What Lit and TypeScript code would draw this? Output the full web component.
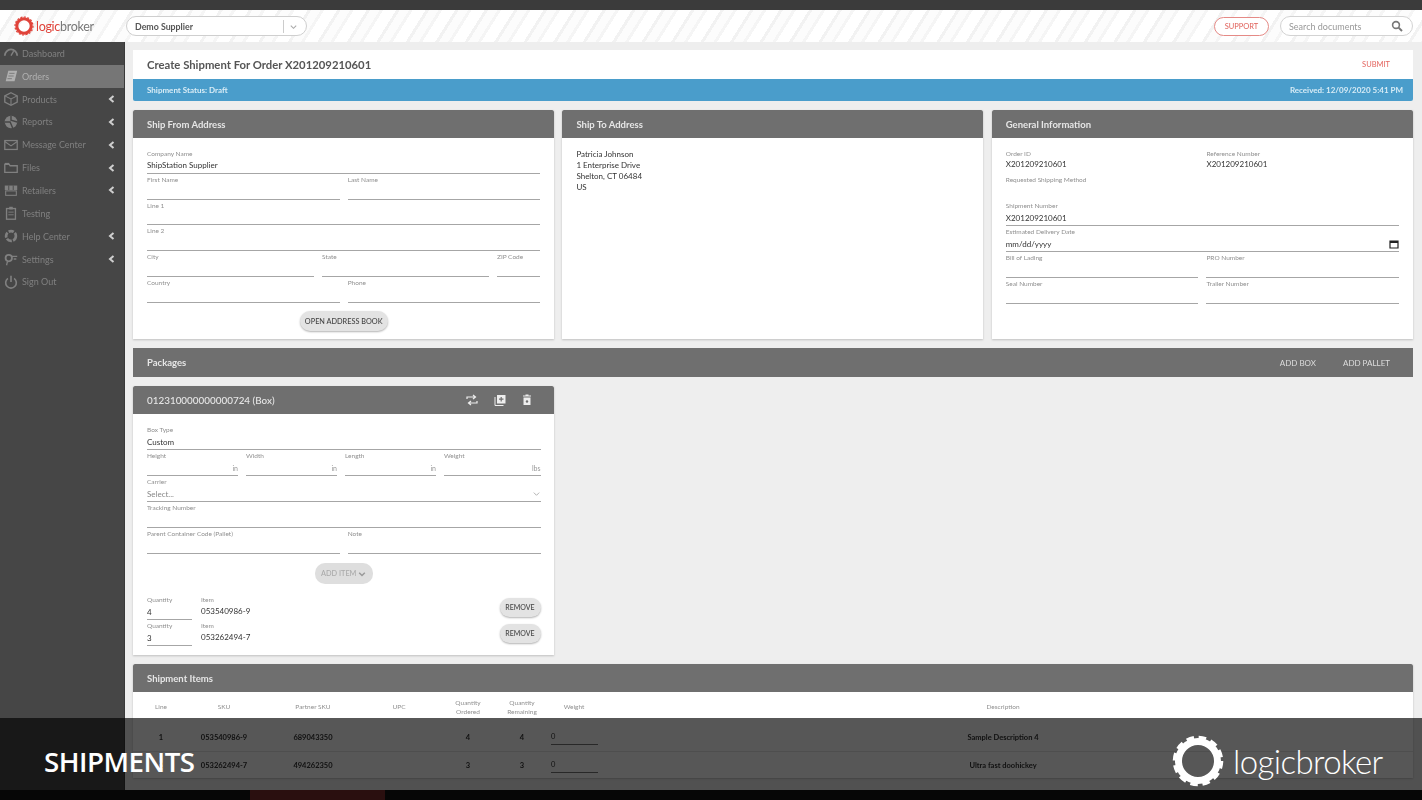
import { LitElement, html, css, svg, nothing } from "lit";
import { customElement } from "lit/decorators.js";

const icons: Record<string, unknown> = {
  dash: svg`<path d="M2 12a7 7 0 0 1 14 0" fill="none" stroke="currentColor" stroke-width="2"/><path d="M9 12l3-5" stroke="currentColor" stroke-width="1.6"/>`,
  orders: svg`<path d="M6 3h10l-3 12H3z" fill="currentColor"/><path d="M7 6h6M6 9h6M5 12h5" stroke="#777" stroke-width="1"/>`,
  products: svg`<path d="M9 2l7 3.5v7L9 16l-7-3.5v-7z" fill="none" stroke="currentColor" stroke-width="1.5"/><path d="M2 5.5L9 9l7-3.5M9 9v7" fill="none" stroke="currentColor" stroke-width="1.2"/>`,
  reports: svg`<circle cx="9" cy="9" r="7" fill="currentColor"/><path d="M2 9h6l3 7M9 2v5l7 2" fill="none" stroke="#454545" stroke-width="1.6"/>`,
  mail: svg`<rect x="2" y="4" width="14" height="10" fill="none" stroke="currentColor" stroke-width="1.4"/><path d="M2 5l7 5 7-5" fill="none" stroke="currentColor" stroke-width="1.3"/>`,
  files: svg`<path d="M2 5h5l1 1.5h8V14H2z" fill="none" stroke="currentColor" stroke-width="1.5"/><path d="M2 4h5" stroke="currentColor" stroke-width="1.5"/>`,
  retail: svg`<path d="M2 4h14v5H2z" fill="currentColor"/><path d="M6.5 4v5M11.5 4v5" stroke="#454545"/><rect x="3" y="10" width="12" height="5" fill="none" stroke="currentColor" stroke-width="1.2"/>`,
  test: svg`<rect x="4" y="4" width="10" height="12" fill="none" stroke="currentColor" stroke-width="1.5"/><rect x="7" y="2" width="4" height="3" fill="currentColor"/><path d="M6 8h6M6 11h6" stroke="currentColor"/>`,
  help: svg`<circle cx="9" cy="9" r="5.5" fill="none" stroke="currentColor" stroke-width="3" stroke-dasharray="6 1.5"/>`,
  settings: svg`<circle cx="6.5" cy="8" r="3.6" fill="none" stroke="currentColor" stroke-width="2"/><path d="M5 12l-1 4M10 6h6M12 9h3" stroke="currentColor" stroke-width="1.5"/>`,
  power: svg`<path d="M5.5 5a6 6 0 1 0 7 0" fill="none" stroke="currentColor" stroke-width="1.8"/><path d="M9 2v7" stroke="currentColor" stroke-width="1.8"/>`,
};

const nav = [
  ["Dashboard", "dash", 0], ["Orders", "orders", 0], ["Products", "products", 1],
  ["Reports", "reports", 1], ["Message Center", "mail", 1], ["Files", "files", 1],
  ["Retailers", "retail", 1], ["Testing", "test", 0], ["Help Center", "help", 1],
  ["Settings", "settings", 1], ["Sign Out", "power", 0],
] as const;

const f = (label: string, value = "", suffix = "") => html`
  <div class="field">
    <span class="lab">${label}</span>
    <div class="inp"><span>${value}</span>${suffix ? html`<em>${suffix}</em>` : nothing}</div>
  </div>`;

const ro = (label: string, value = "") => html`
  <div class="ro"><span class="lab">${label}</span><div class="val">${value}</div></div>`;

@customElement("app-root")
export class AppRoot extends LitElement {
  static styles = css`
    :host { display: block; width: 1422px; height: 800px; overflow: hidden; background: #141414; position: relative;
      font-family: Lato, "Open Sans", sans-serif; color: #333; }
    .app { height: 800px; display: flex; flex-direction: column; filter: blur(0.6px); }
    .strip { height: 10px; flex: none; background: #3b3b3b; }
    .bottom { height: 10px; flex: none; background: #141414; }
    .head { height: 32px; flex: none; display: flex; align-items: center; padding: 0 9px 0 14px;
      background: repeating-linear-gradient(122deg, #fff 0 11px, #f2f2f2 11px 14px, #fcfcfc 14px 22px, #f5f5f5 22px 25px); }
    .logo { display: flex; align-items: center; width: 112px; font-size: 12.5px; letter-spacing: -0.3px; color: #777; }
    .logo svg { width: 20px; height: 20px; margin-right: 2px; }
    .logo b { color: #e0433a; font-weight: 400; }
    .sel { width: 181px; height: 20px; box-sizing: border-box; border: 1px solid #cfcfcf; border-radius: 11px; background: #fff;
      display: flex; align-items: center; padding: 0 8px; font-size: 8.8px; font-weight: 700; color: #555; }
    .sel span { flex: 1; }
    .sel i { width: 1px; height: 13px; background: #ccc; margin-right: 5px; }
    .sel svg { width: 9px; height: 9px; }
    .sp { flex: 1; }
    .support { width: 55px; height: 19px; box-sizing: border-box; border: 1px solid #e58a86; border-radius: 10px; background: #fff; color: #e0605a;
      font-size: 7.5px; display: flex; align-items: center; justify-content: center; margin-right: 11px; }
    .search { width: 133px; height: 20px; box-sizing: border-box; border: 1px solid #d3d3d3; border-radius: 10px; background: #fff; display: flex; align-items: center;
      padding: 0 9px 0 8px; font-size: 9px; color: #999; justify-content: space-between; }
    .search svg { width: 12px; height: 12px; }
    .body { flex: 1; min-height: 0; display: flex; background: #eee; }
    .side { width: 125px; box-sizing: border-box; flex: none; background: #464646; border-right: 1px solid #3a3a3a; }
    .nav { height: 22.85px; display: flex; align-items: center; padding: 0 8px 0 3px; color: #808080; font-size: 9px; box-sizing: border-box; }
    .nav.on { background: #767676; color: #b0b0b0; }
    .nav svg.ic { width: 16px; height: 16px; margin-right: 3px; flex: none; }
    .nav span { flex: 1; }
    .nav svg.ch { width: 7px; height: 8px; color: #cfcfcf; margin-right: 1px; }
    .main { flex: 1; min-width: 0; padding: 8px 9px 0 8px; overflow: hidden; display: flex; flex-direction: column; }
    .title { height: 29px; flex: none; background: #fff; display: flex; align-items: center; justify-content: space-between; padding: 0 23px 0 14px;
      font-size: 11.3px; font-weight: 700; color: #555; }
    .title a { font-size: 7.5px; font-weight: 400; color: #e4655f; }
    .status { height: 22px; flex: none; background: #4a9dcb; color: #d8ecf6; display: flex; align-items: center; justify-content: space-between;
      padding: 0 10px 0 14px; font-size: 8px; font-weight: 700; border-radius: 0 0 2px 2px; }
    .cols { display: grid; grid-template-columns: 420.9px 420.9px 420.9px; column-gap: 8.5px; margin-top: 9px; flex: none; }
    .card { background: #fff; display: flex; flex-direction: column; box-shadow: 0 1px 2px rgba(0,0,0,.2); }
    .bar { height: 28px; flex: none; background: #6f6f6f; color: #e6e6e6; font-size: 9.5px; font-weight: 700; display: flex; align-items: center; padding: 0 14px; border-radius: 2px 2px 0 0; }
    .cb { padding: 10px 13.5px 8px 14px; height: 183px; box-sizing: content-box; display: flex; flex-direction: column; }
    .row { display: grid; column-gap: 8px; }
    .r2 { grid-template-columns: 1fr 1fr; }
    .r3 { grid-template-columns: 167px 167px 1fr; }
    .r4 { grid-template-columns: 91px 91px 91px 1fr; }
    .field { height: 26px; display: flex; flex-direction: column; box-sizing: border-box; padding-top: 1px; }
    .lab { display: block; font-size: 6.5px; line-height: 9px; color: #8f8f8f; white-space: nowrap; }
    .inp { flex: 1; border-bottom: 1px solid #a6a6a6; display: flex; align-items: center; justify-content: space-between; font-size: 8px; color: #333; }
    .inp em { font-style: normal; color: #999; font-size: 7px; }
    .ph { color: #888; }
    .ro { height: 26px; padding-top: 1px; box-sizing: border-box; }
    .val { font-size: 8px; line-height: 13px; color: #333; }
    .addr { padding-top: 11px; height: 182px; }
    .btn { align-self: center; height: 20px; display: flex; align-items: center; justify-content: center; padding: 0 5px; border-radius: 10px; background: #e3e3e3;
      font-size: 7.3px; font-weight: 500; color: #444; box-shadow: 0 1px 2px rgba(0,0,0,.3); white-space: nowrap; }
    .mt { margin-top: 8px; }
    .pk { height: 29px; flex: none; margin-top: 9px; background: #6f6f6f; color: #e6e6e6; font-size: 9.5px; font-weight: 700; display: flex; align-items: center; padding: 0 23px 0 14px; }
    .pk span { flex: 1; }
    .pk a { font-size: 8px; font-weight: 400; color: #ddd; margin-left: 27px; }
    .box { width: 421px; height: 269px; flex: none; margin-top: 9px; }
    .box .bar { font-weight: 500; font-size: 9.9px; }
    .box .bar span { flex: 1; }
    .box .bar svg { width: 12px; height: 12px; margin-left: 15.5px; }
    .box .bar svg:last-child { margin-right: 7px; }
    .bb { padding: 10px 13.5px 0 14px; display: flex; flex-direction: column; }
    .add { width: 58px; height: 21px; padding: 0; gap: 2px; margin-top: 9px; margin-bottom: 10px; background: #dedede; color: #aaa; box-shadow: none; }
    .add svg { width: 8px; height: 8px; }
    .qrow { display: flex; height: 26px; }
    .q { width: 45px; margin-right: 9px; flex: none; }
    .it { flex: 1; padding-top: 1px; }
    .it .val { padding-top: 1px; }
    .qrow .btn { width: 41px; height: 19px; padding: 0; font-size: 7px; }
    .items { flex: none; margin-top: 9px; height: 114px; }
    table { border-collapse: collapse; width: 100%; table-layout: fixed; }
    th { font-size: 6.5px; font-weight: 400; color: #8f8f8f; height: 32px; line-height: 9px; padding: 0 0 3px; box-sizing: border-box; }
    td { font-size: 7.5px; font-weight: 700; color: #333; height: 27px; text-align: center; padding: 0; border-bottom: 1px solid #e4e4e4; }
    .c1 { width: 56px; } .c2 { width: 70px; } .c3 { width: 108px; } .c4 { width: 64px; } .c5 { width: 74px; } .c6 { width: 34px; } .c7 { width: 70px; }
    .desc { padding-right: 16px; }
    td u { display: block; width: 47px; text-decoration: none; font-weight: 400; border-bottom: 1px solid #777; text-align: left; margin-left: 12px; line-height: 14px; }
    .ov { position: absolute; left: 0; right: 0; top: 718px; bottom: 0; background: rgba(0,0,0,.66); }
    .shipments { position: absolute; left: 44px; top: 745px; font-family: "Open Sans", Lato, sans-serif; font-size: 27.7px; line-height: 32px; font-weight: 600; letter-spacing: -0.5px; color: #fff; }
    .mark { position: absolute; left: 1172px; top: 735px; display: flex; align-items: center; color: #fff; font-size: 33px; font-weight: 300; letter-spacing: -0.6px; }
    .mark svg { width: 52px; height: 52px; margin-right: 9px; }
    .red { position: absolute; left: 250px; top: 790px; width: 135px; height: 10px; background: #2a0f0f; }
  `;

  render() {
    return html`
      <div class="app">
        <div class="strip"></div>
        <div class="head">
          <div class="logo">
            <svg viewBox="0 0 20 20"><circle cx="10" cy="10" r="7.2" fill="none" stroke="#e0433a" stroke-width="3"/><circle cx="10" cy="10" r="9" fill="none" stroke="#e0433a" stroke-width="1.2" stroke-dasharray="2 1.5"/></svg>
            <span><b>logic</b>broker</span>
          </div>
          <div class="sel"><span>Demo Supplier</span><i></i><svg viewBox="0 0 10 10"><path d="M2 4l3 3 3-3" fill="none" stroke="#aaa" stroke-width="1.2"/></svg></div>
          <div class="sp"></div>
          <div class="support">SUPPORT</div>
          <div class="search"><span>Search documents</span><svg viewBox="0 0 12 12"><circle cx="5" cy="5" r="3.4" fill="none" stroke="#777" stroke-width="1.6"/><path d="M7.6 7.6L11 11" stroke="#777" stroke-width="2"/></svg></div>
        </div>
        <div class="body">
          <div class="side">
            ${nav.map(([t, i, c]) => html`
              <div class="nav ${t === "Orders" ? "on" : ""}">
                <svg class="ic" viewBox="0 0 18 18">${icons[i]}</svg>
                <span>${t}</span>
                ${c ? html`<svg class="ch" viewBox="0 0 7 8"><path d="M5.5 1L2 4l3.5 3" fill="none" stroke="currentColor" stroke-width="2"/></svg>` : nothing}
              </div>`)}
          </div>
          <div class="main">
            <div class="title"><span>Create Shipment For Order X201209210601</span><a>SUBMIT</a></div>
            <div class="status"><span>Shipment Status: Draft</span><span>Received: 12/09/2020 5:41 PM</span></div>
            <div class="cols">
              <div class="card">
                <div class="bar">Ship From Address</div>
                <div class="cb">
                  ${f("Company Name", "ShipStation Supplier")}
                  <div class="row r2">${f("First Name")}${f("Last Name")}</div>
                  ${f("Line 1")}${f("Line 2")}
                  <div class="row r3">${f("City")}${f("State")}${f("ZIP Code")}</div>
                  <div class="row r2">${f("Country")}${f("Phone")}</div>
                  <div class="btn mt">OPEN ADDRESS BOOK</div>
                </div>
              </div>
              <div class="card">
                <div class="bar">Ship To Address</div>
                <div class="cb addr">
                  <div class="val" style="line-height:11px">Patricia Johnson<br>1 Enterprise Drive<br>Shelton, CT 06484<br>US</div>
                </div>
              </div>
              <div class="card">
                <div class="bar">General Information</div>
                <div class="cb">
                  <div class="row r2">${ro("Order ID", "X201209210601")}${ro("Reference Number", "X201209210601")}</div>
                  ${ro("Requested Shipping Method")}
                  ${f("Shipment Number", "X201209210601")}
                  <div class="field"><span class="lab">Estimated Delivery Date</span><div class="inp"><span>mm/dd/yyyy</span>
                    <svg width="10" height="10" viewBox="0 0 10 10"><path d="M1 2h8v7H1z" fill="none" stroke="#222" stroke-width="1.2"/><path d="M1 2h8v2H1z" fill="#222"/></svg></div></div>
                  <div class="row r2">${f("Bill of Lading")}${f("PRO Number")}</div>
                  <div class="row r2">${f("Seal Number")}${f("Trailer Number")}</div>
                </div>
              </div>
            </div>
            <div class="pk"><span>Packages</span><a>ADD BOX</a><a>ADD PALLET</a></div>
            <div class="card box">
              <div class="bar"><span>012310000000000724 (Box)</span>
                <svg viewBox="0 0 12 12"><path d="M1 5V3h8M7 1l2.500 2L7 5M11 7v2H3M5 7L2.500 9 5 11" fill="none" stroke="#eee" stroke-width="1.2"/></svg>
                <svg viewBox="0 0 12 12"><rect x="3" y="1" width="8.500" height="8.500" fill="#eee"/><path d="M7.200 3v4.500M5 5.200h4.500" stroke="#6f6f6f" stroke-width="1.200"/><path d="M1 3v8.500h8.500" fill="none" stroke="#eee" stroke-width="1"/></svg>
                <svg viewBox="0 0 12 12"><path d="M2.500 3.500h7V11h-7z" fill="#eee"/><path d="M2 2h8M4.500 1h3" stroke="#eee" stroke-width="1.200"/><circle cx="6" cy="7.500" r="1.200" fill="#6f6f6f"/></svg>
              </div>
              <div class="bb">
                ${f("Box Type", "Custom")}
                <div class="row r4">${f("Height", "", "in")}${f("Width", "", "in")}${f("Length", "", "in")}${f("Weight", "", "lbs")}</div>
                <div class="field"><span class="lab">Carrier</span><div class="inp"><span class="ph">Select...</span>
                  <svg width="9" height="9" viewBox="0 0 10 10"><path d="M2 4l3 3 3-3" fill="none" stroke="#aaa" stroke-width="1"/></svg></div></div>
                ${f("Tracking Number")}
                <div class="row r2">${f("Parent Container Code (Pallet)")}${f("Note")}</div>
                <div class="btn add"><span>ADD ITEM</span><svg viewBox="0 0 10 10"><path d="M1.500 3.500L5 7l3.500-3.500" fill="none" stroke="#999" stroke-width="1.800"/></svg></div>
                ${[["4", "053540986-9"], ["3", "053262494-7"]].map(([q, i]) => html`
                  <div class="qrow">
                    <div class="q field"><span class="lab">Quantity</span><div class="inp"><span>${q}</span></div></div>
                    <div class="it"><span class="lab">Item</span><div class="val">${i}</div></div>
                    <div class="btn">REMOVE</div>
                  </div>`)}
              </div>
            </div>
            <div class="card items">
              <div class="bar">Shipment Items</div>
              <table>
                <colgroup><col class="c1"><col class="c2"><col class="c3"><col class="c4"><col class="c5"><col class="c6"><col class="c7"><col></colgroup>
                <tr><th>Line</th><th>SKU</th><th>Partner SKU</th><th>UPC</th><th>Quantity<br>Ordered</th><th>Quantity<br>Remaining</th><th>Weight</th><th class="desc">Description</th></tr>
                <tr><td>1</td><td>053540986-9</td><td>689043350</td><td></td><td>4</td><td>4</td><td><u>0</u></td><td class="desc">Sample Description 4</td></tr>
                <tr><td>2</td><td>053262494-7</td><td>494262350</td><td></td><td>3</td><td>3</td><td><u>0</u></td><td class="desc">Ultra fast doohickey</td></tr>
              </table>
            </div>
          </div>
        </div>
        <div class="bottom"></div>
      </div>
      <div class="ov"></div>
      <div class="red"></div>
      <div class="shipments">SHIPMENTS</div>
      <div class="mark">
        <svg viewBox="0 0 52 52"><circle cx="26" cy="26" r="19.500" fill="none" stroke="#fff" stroke-width="7"/><circle cx="26" cy="26" r="23.500" fill="none" stroke="#fff" stroke-width="3.500" stroke-dasharray="7.500 4.800"/></svg>
        <span>logicbroker</span>
      </div>
    `;
  }
}
